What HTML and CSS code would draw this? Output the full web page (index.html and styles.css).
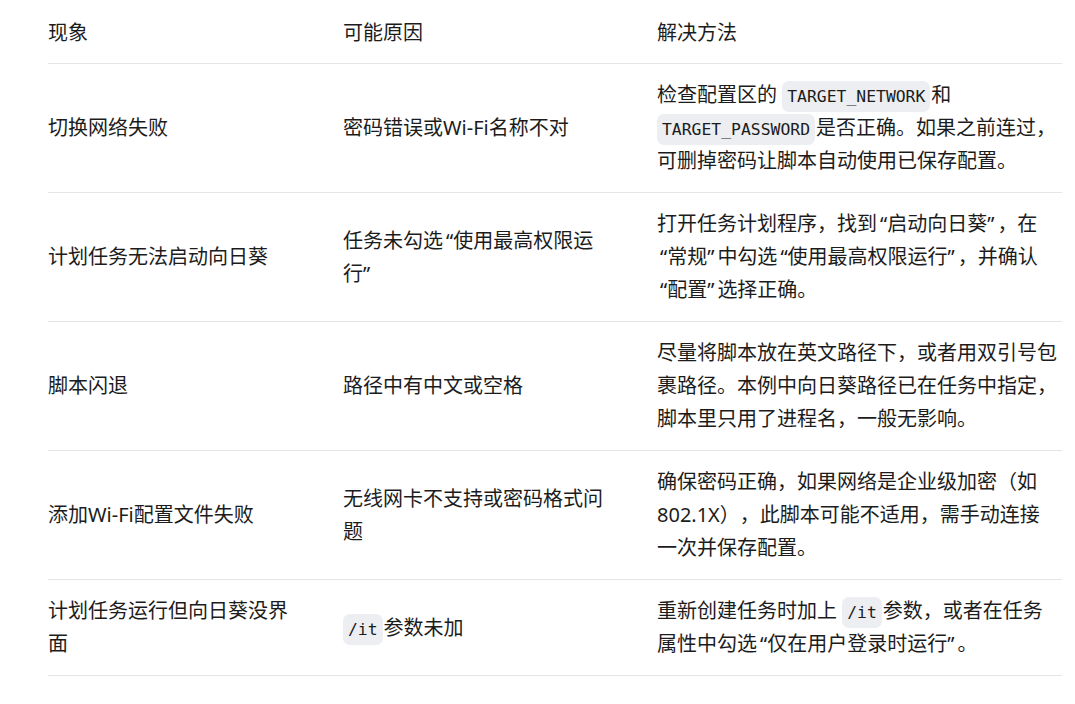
FILE: index.html
```html
<!DOCTYPE html>
<html lang="zh">
<head>
<meta charset="utf-8">
<link rel="stylesheet" href="styles.css">
</head>
<body>
<table class="issues">
  <colgroup>
    <col class="c1"><col class="c2"><col class="c3">
  </colgroup>
  <thead>
    <tr><th>现象</th><th>可能原因</th><th>解决方法</th></tr>
  </thead>
  <tbody>
    <tr>
      <td>切换网络失败</td>
      <td>密码错误或Wi-Fi名称不对</td>
      <td>检查配置区的 <code>TARGET_NETWORK</code>和<code>TARGET_PASSWORD</code>是否正确。如果之前连过，可删掉密码让脚本自动使用已保存配置。</td>
    </tr>
    <tr>
      <td>计划任务无法启动向日葵</td>
      <td>任务未勾选<span class="lq">“</span>使用最高权限运行<span class="rq">”</span></td>
      <td>打开任务计划程序，找到<span class="lq">“</span>启动向日葵<span class="rq">”</span>，在<span class="lq">“</span>常规<span class="rq">”</span>中勾选<span class="lq">“</span>使用最高权限运行<span class="rq">”</span>，并确认<span class="lq">“</span>配置<span class="rq">”</span>选择正确。</td>
    </tr>
    <tr>
      <td>脚本闪退</td>
      <td>路径中有中文或空格</td>
      <td>尽量将脚本放在英文路径下，或者用双引号包裹路径。本例中向日葵路径已在任务中指定，脚本里只用了进程名，一般无影响。</td>
    </tr>
    <tr>
      <td>添加Wi-Fi配置文件失败</td>
      <td>无线网卡不支持或密码格式问题</td>
      <td>确保密码正确，如果网络是企业级加密（如802.1X），此脚本可能不适用，需手动连接一次并保存配置。</td>
    </tr>
    <tr>
      <td>计划任务运行但向日葵没界面</td>
      <td><code>/it</code>参数未加</td>
      <td>重新创建任务时加上 <code>/it</code>参数，或者在任务属性中勾选<span class="lq">“</span>仅在用户登录时运行<span class="rq">”</span>。</td>
    </tr>
  </tbody>
</table>
</body>
</html>
```
FILE: styles.css
```css
html, body {
  margin: 0;
  padding: 0;
  background: #ffffff;
}
body {
  font-family: "Noto Sans", "Noto Sans CJK SC", sans-serif;
  font-size: 20px;
  line-height: 33px;
  color: #1c1c1c;
  text-spacing-trim: space-all;
}
.issues {
  margin-left: 48px;
  width: 1014px;
  table-layout: fixed;
  border-collapse: collapse;
}
.c1 { width: 295px; }
.c2 { width: 314px; }
.c3 { width: 405px; }
.issues th {
  font-weight: normal;
  text-align: left;
  padding: 16px 48px 14px 0;
  vertical-align: middle;
}
.issues td {
  padding: 14px 48px 15px 0;
  vertical-align: middle;
}
.issues th:last-child,
.issues td:last-child {
  padding-right: 5px;
}
.issues tr {
  border-bottom: 1px solid #e5e5e5;
}
.issues code {
  font-family: "DejaVu Sans Mono", monospace;
  font-size: 16.4px;
  line-height: 18px;
  background: #eceef2;
  border-radius: 7px;
  padding: 6px 5px;
  margin: 0 1px 0 0;
  color: #1c1c1c;
}
.lq {
  padding-left: 3px;
}
.rq {
  padding-right: 3px;
}
```
